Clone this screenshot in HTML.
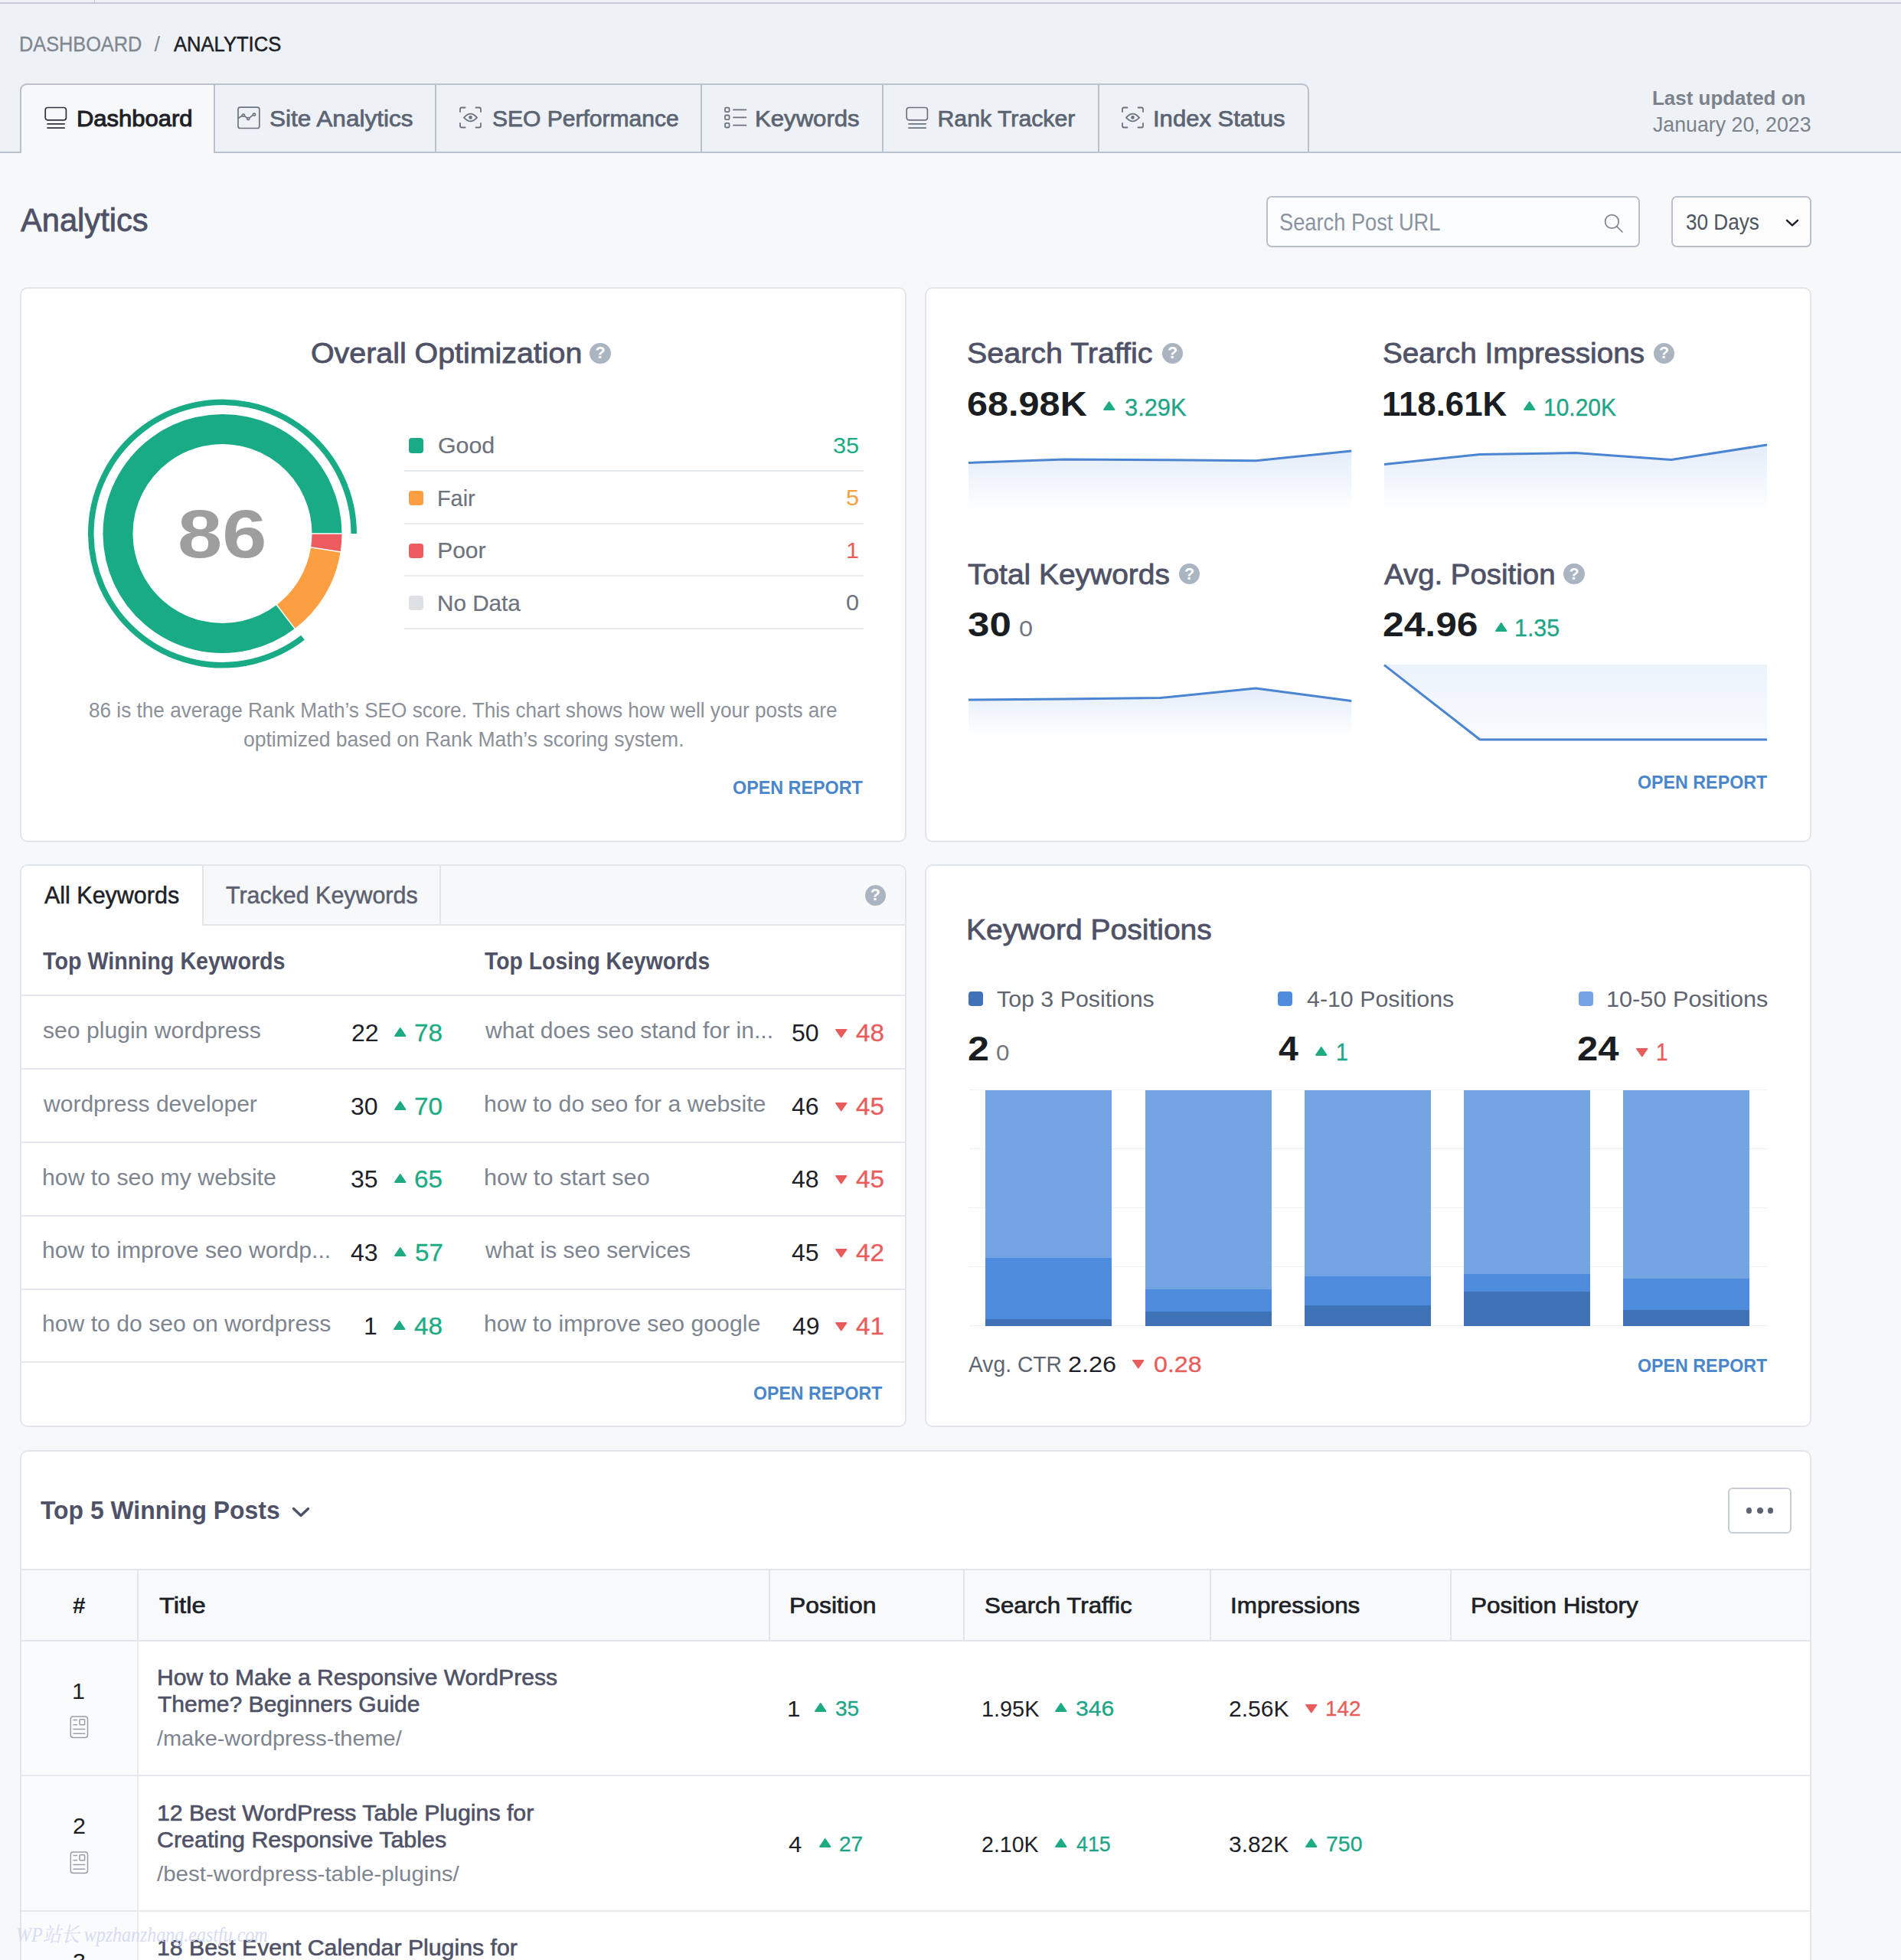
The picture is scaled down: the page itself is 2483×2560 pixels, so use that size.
<!DOCTYPE html>
<html lang="en"><head><meta charset="utf-8"><title>Analytics</title>
<style>
html,body{margin:0;padding:0}
body{width:2483px;height:2560px;position:relative;overflow:hidden;background:#f7f8fa;font-family:"Liberation Sans","Noto Sans CJK SC",sans-serif;}
.t{position:absolute;white-space:nowrap;line-height:1;display:block;transform-origin:0 0}
.b{position:absolute;box-sizing:border-box;display:block}
</style></head><body>
<div class="b" style="left:0.00px;top:0.00px;width:2483.00px;height:200.00px;background:#eef1f5;border-bottom:2px solid #b9c2cd;"></div>
<div class="b" style="left:0.00px;top:3.00px;width:2483.00px;height:1.80px;background:#c3cad3;"></div>
<div class="b" style="left:122.50px;top:0.00px;width:1.50px;height:4.00px;background:#c3cad3;"></div>
<span class="t" style="left:24.92px;top:45.14px;font-size:27.0px;color:#7f8790;transform:scaleX(0.9372);-webkit-text-stroke:0.3px #7f8790;">DASHBOARD</span>
<span class="t" style="left:201.50px;top:45.14px;font-size:27.0px;color:#7f8790;">/</span>
<span class="t" style="left:226.95px;top:45.14px;font-size:27.0px;color:#1d2127;transform:scaleX(0.9472);-webkit-text-stroke:0.5px #1d2127;">ANALYTICS</span>
<div class="b" style="left:26.00px;top:109.00px;width:1684.00px;height:91.00px;border:2px solid #b9c2cd;border-bottom:none;border-radius:9px 9px 0 0;"></div>
<div class="b" style="left:278.00px;top:110.00px;width:2.00px;height:89.00px;background:#b9c2cd;"></div>
<div class="b" style="left:568.00px;top:110.00px;width:2.00px;height:89.00px;background:#b9c2cd;"></div>
<div class="b" style="left:915.00px;top:110.00px;width:2.00px;height:89.00px;background:#b9c2cd;"></div>
<div class="b" style="left:1152.00px;top:110.00px;width:2.00px;height:89.00px;background:#b9c2cd;"></div>
<div class="b" style="left:1434.00px;top:110.00px;width:2.00px;height:89.00px;background:#b9c2cd;"></div>
<div class="b" style="left:26.00px;top:109.00px;width:255.00px;height:91.00px;background:#f7f8fa;border:2px solid #b9c2cd;border-bottom:none;border-radius:9px 0 0 0;"></div>
<svg class="b" style="left:57.50px;top:139.00px" width="30.00" height="30.00" viewBox="0 0 30.00 30.00"><g fill="none" stroke="#30343c" stroke-width="1.7" stroke-linecap="round"><rect x="1.2" y="1.5" width="27.2" height="16.4" rx="3.2"/><path d="M4 22.8H26.2M4 28.1H26.2"/></g></svg>
<svg class="b" style="left:310.00px;top:139.00px" width="30.00" height="30.00" viewBox="0 0 30.00 30.00"><g fill="none" stroke="#6c7480" stroke-width="1.7" stroke-linejoin="round"><rect x="1" y="1.2" width="27.8" height="27.3" rx="2.6"/><path d="M1 15.5L6.3 12.2M9.4 12.6L12.6 15M15.4 15.2L20.6 11.2"/><circle cx="7.9" cy="11.6" r="1.6"/><circle cx="14.2" cy="16.1" r="1.6"/><circle cx="22" cy="10.6" r="1.6"/></g></svg>
<svg class="b" style="left:599.60px;top:139.30px" width="30.00" height="30.00" viewBox="0 0 30.00 30.00"><g fill="none" stroke="#6c7480" stroke-width="1.8" stroke-linecap="round"><path d="M1 7V3.5Q1 1.5 3 1.5H7.5M21.5 1.5H26Q28 1.5 28 3.5V7M28 22V25.5Q28 27.5 26 27.5H21.5M7.5 27.5H3Q1 27.5 1 25.5V22"/><path d="M6 14.6Q14.5 4.6 23 14.6Q14.5 24 6 14.6Z"/></g><circle cx="14.5" cy="14.4" r="2.3" fill="#6c7480"/></svg>
<svg class="b" style="left:946.00px;top:139.30px" width="30.00" height="30.00" viewBox="0 0 30.00 30.00"><g fill="none" stroke="#6c7480" stroke-width="1.8" stroke-linecap="round"><rect x="1" y="1.6000000000000005" width="5.6" height="5.6" rx="1.4"/><path d="M12 4.4H28.4"/><rect x="1" y="11.5" width="5.6" height="5.6" rx="1.4"/><path d="M12 14.3H28.4"/><rect x="1" y="21.9" width="5.6" height="5.6" rx="1.4"/><path d="M12 24.7H28.4"/></g></svg>
<svg class="b" style="left:1183.00px;top:139.00px" width="30.00" height="30.00" viewBox="0 0 30.00 30.00"><g fill="none" stroke="#6c7480" stroke-width="1.7" stroke-linecap="round"><rect x="1.2" y="1.5" width="27.2" height="16.4" rx="3.2"/><path d="M4 22.8H26.2M4 28.1H26.2"/></g></svg>
<svg class="b" style="left:1464.50px;top:139.30px" width="30.00" height="30.00" viewBox="0 0 30.00 30.00"><g fill="none" stroke="#6c7480" stroke-width="1.8" stroke-linecap="round"><path d="M1 7V3.5Q1 1.5 3 1.5H7.5M21.5 1.5H26Q28 1.5 28 3.5V7M28 22V25.5Q28 27.5 26 27.5H21.5M7.5 27.5H3Q1 27.5 1 25.5V22"/><path d="M6 14.6Q14.5 4.6 23 14.6Q14.5 24 6 14.6Z"/></g><circle cx="14.5" cy="14.4" r="2.3" fill="#6c7480"/></svg>
<span class="t" style="left:99.66px;top:139.59px;font-size:30.25px;color:#1d2127;transform:scaleX(1.0240);-webkit-text-stroke:1.0px #1d2127;">Dashboard</span>
<span class="t" style="left:352.47px;top:139.59px;font-size:30.25px;color:#5b6472;transform:scaleX(1.0420);-webkit-text-stroke:0.75px #5b6472;">Site Analytics</span>
<span class="t" style="left:642.64px;top:139.59px;font-size:30.25px;color:#5b6472;transform:scaleX(0.9928);-webkit-text-stroke:0.75px #5b6472;">SEO Performance</span>
<span class="t" style="left:986.45px;top:139.59px;font-size:30.25px;color:#5b6472;transform:scaleX(1.0291);-webkit-text-stroke:0.75px #5b6472;">Keywords</span>
<span class="t" style="left:1224.52px;top:139.59px;font-size:30.25px;color:#5b6472;-webkit-text-stroke:0.75px #5b6472;">Rank Tracker</span>
<span class="t" style="left:1506.14px;top:139.59px;font-size:30.25px;color:#5b6472;transform:scaleX(1.0257);-webkit-text-stroke:0.75px #5b6472;">Index Status</span>
<span class="t" style="left:2158.26px;top:115.08px;font-size:26.25px;color:#7b828c;transform:scaleX(0.9883);font-weight:700;">Last updated on</span>
<span class="t" style="left:2159.08px;top:149.22px;font-size:27.5px;color:#7b828c;transform:scaleX(0.9721);">January 20, 2023</span>
<span class="t" style="left:26.92px;top:266.74px;font-size:42.25px;color:#4f5267;transform:scaleX(0.9853);-webkit-text-stroke:0.8px #4f5267;">Analytics</span>
<div class="b" style="left:1654.00px;top:256.00px;width:488.00px;height:67.00px;background:#fbfcfd;border:2px solid #b9c0ca;border-radius:7px;"></div>
<span class="t" style="left:1671.46px;top:274.68px;font-size:30.5px;color:#8a94a0;transform:scaleX(0.8931);">Search Post URL</span>
<svg class="b" style="left:2094.00px;top:278.00px" width="30.00" height="30.00" viewBox="0 0 30.00 30.00"><g fill="none" stroke="#7d8590" stroke-width="1.7" stroke-linecap="round"><circle cx="11.4" cy="11.4" r="8.8"/><path d="M18 18L25 25"/></g></svg>
<div class="b" style="left:2183.00px;top:256.00px;width:183.00px;height:67.00px;background:#fcfcfd;border:2px solid #b9c0ca;border-radius:7px;"></div>
<span class="t" style="left:2202.00px;top:275.32px;font-size:29.75px;color:#4d5560;transform:scaleX(0.8791);">30 Days</span>
<svg class="b" style="left:2331.00px;top:284.00px" width="20.00" height="14.00" viewBox="0 0 20.00 14.00"><path d="M3 3.8L10 10.3L17 3.8" fill="none" stroke="#1d2127" stroke-width="2.4" stroke-linecap="round" stroke-linejoin="round"/></svg>
<div class="b" style="left:26.00px;top:375.00px;width:1158.00px;height:725.00px;background:#fff;border:2px solid #e2e5e9;border-radius:10px;"></div>
<span class="t" style="left:406.14px;top:443.04px;font-size:37.75px;color:#4f5267;transform:scaleX(1.0425);-webkit-text-stroke:0.8px #4f5267;">Overall Optimization</span>
<div class="b" style="left:770.30px;top:447.60px;width:27.40px;height:27.40px;background:#abb5c1;border-radius:50%;"></div>
<span class="t" style="left:777.56px;top:451.20px;font-size:21.5px;color:#fff;font-weight:700;">?</span>
<svg class="b" style="left:100.00px;top:500.00px" width="400.00" height="400.00" viewBox="100 500 400 400"><path d="M427.00 697.00 A136.5 136.5 0 0 1 425.40 717.84" fill="none" stroke="#ec5b5e" stroke-width="39"/><path d="M425.40 717.84 A136.5 136.5 0 0 1 373.25 805.56" fill="none" stroke="#fb9f42" stroke-width="39"/><path d="M373.25 805.56 A136.5 136.5 0 1 1 427.00 697.00" fill="none" stroke="#19ab86" stroke-width="39"/><path d="M406.50 697.00L447.50 697.00" stroke="#fff" stroke-width="1.6"/><path d="M405.14 714.71L445.66 720.97" stroke="#fff" stroke-width="1.6"/><path d="M360.82 789.25L385.68 821.86" stroke="#fff" stroke-width="1.6"/><path d="M395.50 832.85 A171.7 171.7 0 1 1 462.20 697.00" fill="none" stroke="#19ab86" stroke-width="7.6"/></svg>
<span class="t" style="left:232.38px;top:653.36px;font-size:89.0px;color:#9e9e9e;transform:scaleX(1.1758);font-weight:700;">86</span>
<div class="b" style="left:533.70px;top:572.40px;width:19.20px;height:19.20px;background:#19ab86;border-radius:4px;"></div>
<span class="t" style="left:572.08px;top:566.90px;font-size:30.0px;color:#6d737d;transform:scaleX(1.0107);-webkit-text-stroke:0.2px #6d737d;">Good</span>
<span class="t" style="left:1088.13px;top:567.54px;font-size:29.25px;color:#1dab84;transform:scaleX(1.0500);">35</span>
<div class="b" style="left:527.60px;top:614.00px;width:600.30px;height:2.00px;background:#e8ebee;"></div>
<div class="b" style="left:533.70px;top:641.00px;width:19.20px;height:19.20px;background:#fb9f42;border-radius:4px;"></div>
<span class="t" style="left:571.24px;top:635.50px;font-size:30.0px;color:#6d737d;transform:scaleX(0.9608);-webkit-text-stroke:0.2px #6d737d;">Fair</span>
<span class="t" style="left:1105.21px;top:636.14px;font-size:29.25px;color:#f5a245;transform:scaleX(1.0500);">5</span>
<div class="b" style="left:527.60px;top:683.00px;width:600.30px;height:2.00px;background:#e8ebee;"></div>
<div class="b" style="left:533.70px;top:709.60px;width:19.20px;height:19.20px;background:#ec5b5e;border-radius:4px;"></div>
<span class="t" style="left:571.14px;top:704.11px;font-size:30.0px;color:#6d737d;-webkit-text-stroke:0.2px #6d737d;">Poor</span>
<span class="t" style="left:1105.42px;top:704.74px;font-size:29.25px;color:#e85c5c;transform:scaleX(1.0500);">1</span>
<div class="b" style="left:527.60px;top:751.00px;width:600.30px;height:2.00px;background:#e8ebee;"></div>
<div class="b" style="left:533.70px;top:778.20px;width:19.20px;height:19.20px;background:#dde1e5;border-radius:4px;"></div>
<span class="t" style="left:571.17px;top:772.70px;font-size:30.0px;color:#6d737d;transform:scaleX(0.9889);-webkit-text-stroke:0.2px #6d737d;">No Data</span>
<span class="t" style="left:1105.12px;top:773.34px;font-size:29.25px;color:#6d737d;transform:scaleX(1.0500);">0</span>
<div class="b" style="left:527.60px;top:820.00px;width:600.30px;height:2.00px;background:#e8ebee;"></div>
<span class="t" style="left:116.46px;top:914.76px;font-size:26.75px;color:#8b9099;transform:scaleX(0.9780);">86 is the average Rank Math’s SEO score. This chart shows how well your posts are</span>
<span class="t" style="left:318.19px;top:952.86px;font-size:26.75px;color:#8b9099;transform:scaleX(0.9908);">optimized based on Rank Math’s scoring system.</span>
<span class="t" style="left:957.44px;top:1017.35px;font-size:24.75px;color:#4a86cc;transform:scaleX(0.9426);font-weight:700;">OPEN REPORT</span>
<div class="b" style="left:1208.00px;top:375.00px;width:1158.00px;height:725.00px;background:#fff;border:2px solid #e2e5e9;border-radius:10px;"></div>
<span class="t" style="left:1263.21px;top:443.04px;font-size:37.75px;color:#4f5267;transform:scaleX(1.0445);-webkit-text-stroke:0.8px #4f5267;">Search Traffic</span>
<div class="b" style="left:1517.70px;top:447.60px;width:27.40px;height:27.40px;background:#abb5c1;border-radius:50%;"></div>
<span class="t" style="left:1524.96px;top:451.20px;font-size:21.5px;color:#fff;font-weight:700;">?</span>
<span class="t" style="left:1263.22px;top:505.63px;font-size:44.5px;color:#1a1e22;transform:scaleX(1.0922);font-weight:700;">68.98K</span>
<svg class="b" style="left:1440.00px;top:523.00px" width="17.50" height="13.80" viewBox="-1 -1 17.50 13.80"><path d="M7.75 1 L14.50 11.00 L1 11.00 Z" fill="#1dab84" stroke="#1dab84" stroke-width="1.8" stroke-linejoin="round"/></svg>
<span class="t" style="left:1468.83px;top:516.68px;font-size:30.5px;color:#1fa587;transform:scaleX(1.0102);-webkit-text-stroke:0.35px #1fa587;">3.29K</span>
<span class="t" style="left:1806.24px;top:443.04px;font-size:37.75px;color:#4f5267;transform:scaleX(1.0256);-webkit-text-stroke:0.8px #4f5267;">Search Impressions</span>
<div class="b" style="left:2159.80px;top:447.60px;width:27.40px;height:27.40px;background:#abb5c1;border-radius:50%;"></div>
<span class="t" style="left:2167.06px;top:451.20px;font-size:21.5px;color:#fff;font-weight:700;">?</span>
<span class="t" style="left:1805.24px;top:505.63px;font-size:44.5px;color:#1a1e22;transform:scaleX(0.9841);font-weight:700;">118.61K</span>
<svg class="b" style="left:1989.00px;top:523.00px" width="17.50" height="13.80" viewBox="-1 -1 17.50 13.80"><path d="M7.75 1 L14.50 11.00 L1 11.00 Z" fill="#1dab84" stroke="#1dab84" stroke-width="1.8" stroke-linejoin="round"/></svg>
<span class="t" style="left:2016.32px;top:516.68px;font-size:30.5px;color:#1fa587;transform:scaleX(0.9829);-webkit-text-stroke:0.35px #1fa587;">10.20K</span>
<span class="t" style="left:1264.13px;top:731.54px;font-size:37.75px;color:#4f5267;transform:scaleX(1.0309);-webkit-text-stroke:0.8px #4f5267;">Total Keywords</span>
<div class="b" style="left:1539.80px;top:736.10px;width:27.40px;height:27.40px;background:#abb5c1;border-radius:50%;"></div>
<span class="t" style="left:1547.06px;top:739.70px;font-size:21.5px;color:#fff;font-weight:700;">?</span>
<span class="t" style="left:1263.83px;top:794.13px;font-size:44.5px;color:#1a1e22;transform:scaleX(1.1468);font-weight:700;">30</span>
<span class="t" style="left:1330.73px;top:806.66px;font-size:28.75px;color:#73787f;transform:scaleX(1.1278);">0</span>
<span class="t" style="left:1807.92px;top:731.54px;font-size:37.75px;color:#4f5267;transform:scaleX(1.0178);-webkit-text-stroke:0.8px #4f5267;">Avg. Position</span>
<div class="b" style="left:2042.30px;top:736.10px;width:27.40px;height:27.40px;background:#abb5c1;border-radius:50%;"></div>
<span class="t" style="left:2049.56px;top:739.70px;font-size:21.5px;color:#fff;font-weight:700;">?</span>
<span class="t" style="left:1806.27px;top:794.13px;font-size:44.5px;color:#1a1e22;transform:scaleX(1.1182);font-weight:700;">24.96</span>
<svg class="b" style="left:1952.00px;top:811.50px" width="17.50" height="13.80" viewBox="-1 -1 17.50 13.80"><path d="M7.75 1 L14.50 11.00 L1 11.00 Z" fill="#1dab84" stroke="#1dab84" stroke-width="1.8" stroke-linejoin="round"/></svg>
<span class="t" style="left:1978.19px;top:805.18px;font-size:30.5px;color:#1fa587;transform:scaleX(0.9953);-webkit-text-stroke:0.35px #1fa587;">1.35</span>
<svg class="b" style="left:1261.00px;top:583.30px" width="508.30" height="86.70" viewBox="1261 583.3 508.29999999999995 86.70000000000005"><defs><linearGradient id="g1" gradientUnits="userSpaceOnUse" x1="0" y1="589.3" x2="0" y2="668"><stop offset="0" stop-color="#4e8cdd" stop-opacity="0.16"/><stop offset="1" stop-color="#4e8cdd" stop-opacity="0"/></linearGradient></defs><polygon points="1265.0,604.8 1390.1,600.4 1515.2,601.0 1640.2,602.0 1765.3,589.3 1765.3,668 1265.0,668" fill="url(#g1)"/><polyline points="1265.0,604.8 1390.1,600.4 1515.2,601.0 1640.2,602.0 1765.3,589.3" fill="none" stroke="#4b84d1" stroke-width="3" stroke-linejoin="round"/></svg>
<svg class="b" style="left:1804.00px;top:574.50px" width="508.00" height="95.50" viewBox="1804 574.5 508 95.5"><defs><linearGradient id="g2" gradientUnits="userSpaceOnUse" x1="0" y1="580.5" x2="0" y2="668"><stop offset="0" stop-color="#4e8cdd" stop-opacity="0.16"/><stop offset="1" stop-color="#4e8cdd" stop-opacity="0"/></linearGradient></defs><polygon points="1808.0,606.0 1933.0,593.0 2058.0,591.0 2183.0,600.0 2308.0,580.5 2308.0,668 1808.0,668" fill="url(#g2)"/><polyline points="1808.0,606.0 1933.0,593.0 2058.0,591.0 2183.0,600.0 2308.0,580.5" fill="none" stroke="#4b84d1" stroke-width="3" stroke-linejoin="round"/></svg>
<svg class="b" style="left:1261.00px;top:893.40px" width="508.30" height="70.60" viewBox="1261 893.4 508.29999999999995 70.60000000000002"><defs><linearGradient id="g3" gradientUnits="userSpaceOnUse" x1="0" y1="899.4" x2="0" y2="962"><stop offset="0" stop-color="#4e8cdd" stop-opacity="0.16"/><stop offset="1" stop-color="#4e8cdd" stop-opacity="0"/></linearGradient></defs><polygon points="1265.0,914.5 1390.1,913.5 1515.2,912.0 1640.2,899.4 1765.3,916.0 1765.3,962 1265.0,962" fill="url(#g3)"/><polyline points="1265.0,914.5 1390.1,913.5 1515.2,912.0 1640.2,899.4 1765.3,916.0" fill="none" stroke="#4b84d1" stroke-width="3" stroke-linejoin="round"/></svg>
<svg class="b" style="left:1800.00px;top:860.00px" width="520.00" height="112.00" viewBox="1800 860 520 112"><defs><linearGradient id="g4" x1="0" y1="0" x2="0" y2="1"><stop offset="0" stop-color="#4e8cdd" stop-opacity="0.115"/><stop offset="1" stop-color="#4e8cdd" stop-opacity="0.03"/></linearGradient></defs><polygon points="1808,868 2308,868 2308,966 1933,966" fill="url(#g4)"/><polyline points="1808,868.6 1933,966 2308,966" fill="none" stroke="#4b84d1" stroke-width="3" stroke-linejoin="round"/></svg>
<span class="t" style="left:2139.05px;top:1010.05px;font-size:24.75px;color:#4a86cc;transform:scaleX(0.9392);font-weight:700;">OPEN REPORT</span>
<div class="b" style="left:26.00px;top:1129.00px;width:1158.00px;height:735.00px;background:#fff;border:2px solid #e2e5e9;border-radius:10px;overflow:hidden;"><div class="b" style="left:0;top:0;width:1160px;height:78px;background:#f7f8fa;border-bottom:2px solid #e2e5e9;"></div><div class="b" style="left:0;top:0;width:238px;height:78px;background:#fff;border-right:2px solid #e2e5e9;"></div><div class="b" style="left:546px;top:0;width:2px;height:77px;background:#e2e5e9;"></div></div>
<span class="t" style="left:57.94px;top:1153.75px;font-size:31.25px;color:#1d2127;transform:scaleX(0.9753);-webkit-text-stroke:0.5px #1d2127;">All Keywords</span>
<span class="t" style="left:294.92px;top:1153.75px;font-size:31.25px;color:#5b6170;transform:scaleX(0.9727);-webkit-text-stroke:0.5px #5b6170;">Tracked Keywords</span>
<div class="b" style="left:1129.60px;top:1155.80px;width:27.40px;height:27.40px;background:#abb5c1;border-radius:50%;"></div>
<span class="t" style="left:1136.86px;top:1159.40px;font-size:21.5px;color:#fff;font-weight:700;">?</span>
<span class="t" style="left:56.28px;top:1240.18px;font-size:30.5px;color:#4f5267;transform:scaleX(0.9413);font-weight:700;">Top Winning Keywords</span>
<span class="t" style="left:633.38px;top:1240.18px;font-size:30.5px;color:#4f5267;transform:scaleX(0.9300);font-weight:700;">Top Losing Keywords</span>
<div class="b" style="left:28.00px;top:1299.00px;width:1154.00px;height:2.00px;background:#e5e8ec;"></div>
<div class="b" style="left:28.00px;top:1395.00px;width:1154.00px;height:2.00px;background:#e5e8ec;"></div>
<div class="b" style="left:28.00px;top:1491.00px;width:1154.00px;height:2.00px;background:#e5e8ec;"></div>
<div class="b" style="left:28.00px;top:1587.00px;width:1154.00px;height:2.00px;background:#e5e8ec;"></div>
<div class="b" style="left:28.00px;top:1683.00px;width:1154.00px;height:2.00px;background:#e5e8ec;"></div>
<div class="b" style="left:28.00px;top:1778.00px;width:1154.00px;height:2.00px;background:#e5e8ec;"></div>
<span class="t" style="left:55.76px;top:1331.95px;font-size:29.0px;color:#7d8590;transform:scaleX(1.0390);">seo plugin wordpress</span>
<span class="t" style="left:541.36px;top:1333.88px;font-size:30.5px;color:#1dab84;transform:scaleX(1.0900);-webkit-text-stroke:0.3px #1dab84;">78</span>
<svg class="b" style="left:513.97px;top:1340.70px" width="17.50" height="13.80" viewBox="-1 -1 17.50 13.80"><path d="M7.75 1 L14.50 11.00 L1 11.00 Z" fill="#1dab84" stroke="#1dab84" stroke-width="1.8" stroke-linejoin="round"/></svg>
<span class="t" style="left:458.56px;top:1333.88px;font-size:30.5px;color:#1d2127;transform:scaleX(1.0500);">22</span>
<span class="t" style="left:633.74px;top:1331.95px;font-size:29.0px;color:#7d8590;transform:scaleX(1.0366);">what does seo stand for in...</span>
<span class="t" style="left:1118.26px;top:1333.88px;font-size:30.5px;color:#e85c5c;transform:scaleX(1.0900);-webkit-text-stroke:0.3px #e85c5c;">48</span>
<svg class="b" style="left:1089.93px;top:1342.70px" width="17.50" height="13.50" viewBox="-1 -1 17.50 13.50"><path d="M1 0.8 L14.50 0.8 L7.75 10.50 Z" fill="#e85c5c" stroke="#e85c5c" stroke-width="1.8" stroke-linejoin="round"/></svg>
<span class="t" style="left:1034.16px;top:1333.88px;font-size:30.5px;color:#1d2127;transform:scaleX(1.0500);">50</span>
<span class="t" style="left:56.64px;top:1427.75px;font-size:29.0px;color:#7d8590;transform:scaleX(1.0358);">wordpress developer</span>
<span class="t" style="left:541.22px;top:1429.68px;font-size:30.5px;color:#1dab84;transform:scaleX(1.0900);-webkit-text-stroke:0.3px #1dab84;">70</span>
<svg class="b" style="left:513.82px;top:1436.50px" width="17.50" height="13.80" viewBox="-1 -1 17.50 13.80"><path d="M7.75 1 L14.50 11.00 L1 11.00 Z" fill="#1dab84" stroke="#1dab84" stroke-width="1.8" stroke-linejoin="round"/></svg>
<span class="t" style="left:458.05px;top:1429.68px;font-size:30.5px;color:#1d2127;transform:scaleX(1.0500);">30</span>
<span class="t" style="left:631.60px;top:1427.75px;font-size:29.0px;color:#7d8590;transform:scaleX(1.0436);">how to do seo for a website</span>
<span class="t" style="left:1118.22px;top:1429.68px;font-size:30.5px;color:#e85c5c;transform:scaleX(1.0900);-webkit-text-stroke:0.3px #e85c5c;">45</span>
<svg class="b" style="left:1089.88px;top:1438.50px" width="17.50" height="13.50" viewBox="-1 -1 17.50 13.50"><path d="M1 0.8 L14.50 0.8 L7.75 10.50 Z" fill="#e85c5c" stroke="#e85c5c" stroke-width="1.8" stroke-linejoin="round"/></svg>
<span class="t" style="left:1034.26px;top:1429.68px;font-size:30.5px;color:#1d2127;transform:scaleX(1.0500);">46</span>
<span class="t" style="left:54.50px;top:1523.55px;font-size:29.0px;color:#7d8590;transform:scaleX(1.0425);">how to seo my website</span>
<span class="t" style="left:541.32px;top:1525.48px;font-size:30.5px;color:#1dab84;transform:scaleX(1.0900);-webkit-text-stroke:0.3px #1dab84;">65</span>
<svg class="b" style="left:513.90px;top:1532.30px" width="17.50" height="13.80" viewBox="-1 -1 17.50 13.80"><path d="M7.75 1 L14.50 11.00 L1 11.00 Z" fill="#1dab84" stroke="#1dab84" stroke-width="1.8" stroke-linejoin="round"/></svg>
<span class="t" style="left:458.23px;top:1525.48px;font-size:30.5px;color:#1d2127;transform:scaleX(1.0500);">35</span>
<span class="t" style="left:631.57px;top:1523.55px;font-size:29.0px;color:#7d8590;transform:scaleX(1.0586);">how to start seo</span>
<span class="t" style="left:1118.22px;top:1525.48px;font-size:30.5px;color:#e85c5c;transform:scaleX(1.0900);-webkit-text-stroke:0.3px #e85c5c;">45</span>
<svg class="b" style="left:1089.88px;top:1534.30px" width="17.50" height="13.50" viewBox="-1 -1 17.50 13.50"><path d="M1 0.8 L14.50 0.8 L7.75 10.50 Z" fill="#e85c5c" stroke="#e85c5c" stroke-width="1.8" stroke-linejoin="round"/></svg>
<span class="t" style="left:1034.25px;top:1525.48px;font-size:30.5px;color:#1d2127;transform:scaleX(1.0500);">48</span>
<span class="t" style="left:54.51px;top:1619.35px;font-size:29.0px;color:#7d8590;transform:scaleX(1.0402);">how to improve seo wordp...</span>
<span class="t" style="left:541.59px;top:1621.28px;font-size:30.5px;color:#1dab84;transform:scaleX(1.0900);-webkit-text-stroke:0.3px #1dab84;">57</span>
<svg class="b" style="left:513.82px;top:1628.10px" width="17.50" height="13.80" viewBox="-1 -1 17.50 13.80"><path d="M7.75 1 L14.50 11.00 L1 11.00 Z" fill="#1dab84" stroke="#1dab84" stroke-width="1.8" stroke-linejoin="round"/></svg>
<span class="t" style="left:458.21px;top:1621.28px;font-size:30.5px;color:#1d2127;transform:scaleX(1.0500);">43</span>
<span class="t" style="left:633.74px;top:1619.35px;font-size:29.0px;color:#7d8590;transform:scaleX(1.0329);">what is seo services</span>
<span class="t" style="left:1118.49px;top:1621.28px;font-size:30.5px;color:#e85c5c;transform:scaleX(1.0900);-webkit-text-stroke:0.3px #e85c5c;">42</span>
<svg class="b" style="left:1090.16px;top:1630.10px" width="17.50" height="13.50" viewBox="-1 -1 17.50 13.50"><path d="M1 0.8 L14.50 0.8 L7.75 10.50 Z" fill="#e85c5c" stroke="#e85c5c" stroke-width="1.8" stroke-linejoin="round"/></svg>
<span class="t" style="left:1034.48px;top:1621.28px;font-size:30.5px;color:#1d2127;transform:scaleX(1.0500);">45</span>
<span class="t" style="left:54.51px;top:1715.15px;font-size:29.0px;color:#7d8590;transform:scaleX(1.0404);">how to do seo on wordpress</span>
<span class="t" style="left:541.36px;top:1717.08px;font-size:30.5px;color:#1dab84;transform:scaleX(1.0900);-webkit-text-stroke:0.3px #1dab84;">48</span>
<svg class="b" style="left:513.03px;top:1723.90px" width="17.50" height="13.80" viewBox="-1 -1 17.50 13.80"><path d="M7.75 1 L14.50 11.00 L1 11.00 Z" fill="#1dab84" stroke="#1dab84" stroke-width="1.8" stroke-linejoin="round"/></svg>
<span class="t" style="left:475.38px;top:1717.08px;font-size:30.5px;color:#1d2127;transform:scaleX(1.0500);">1</span>
<span class="t" style="left:631.60px;top:1715.15px;font-size:29.0px;color:#7d8590;transform:scaleX(1.0422);">how to improve seo google</span>
<span class="t" style="left:1118.44px;top:1717.08px;font-size:30.5px;color:#e85c5c;transform:scaleX(1.0900);-webkit-text-stroke:0.3px #e85c5c;">41</span>
<svg class="b" style="left:1090.11px;top:1725.90px" width="17.50" height="13.50" viewBox="-1 -1 17.50 13.50"><path d="M1 0.8 L14.50 0.8 L7.75 10.50 Z" fill="#e85c5c" stroke="#e85c5c" stroke-width="1.8" stroke-linejoin="round"/></svg>
<span class="t" style="left:1034.60px;top:1717.08px;font-size:30.5px;color:#1d2127;transform:scaleX(1.0500);">49</span>
<span class="t" style="left:983.65px;top:1808.25px;font-size:24.75px;color:#4a86cc;transform:scaleX(0.9347);font-weight:700;">OPEN REPORT</span>
<div class="b" style="left:1208.00px;top:1129.00px;width:1158.00px;height:735.00px;background:#fff;border:2px solid #e2e5e9;border-radius:10px;"></div>
<span class="t" style="left:1261.60px;top:1196.14px;font-size:37.75px;color:#4f5267;transform:scaleX(1.0331);-webkit-text-stroke:0.8px #4f5267;">Keyword Positions</span>
<div class="b" style="left:1264.80px;top:1295.40px;width:19.00px;height:19.00px;background:#3f72b6;border-radius:4px;"></div>
<span class="t" style="left:1302.32px;top:1290.74px;font-size:29.25px;color:#5f6570;transform:scaleX(1.0373);">Top 3 Positions</span>
<span class="t" style="left:1263.56px;top:1349.18px;font-size:43.5px;color:#1a1e22;transform:scaleX(1.1555);font-weight:700;">2</span>
<span class="t" style="left:1300.77px;top:1360.66px;font-size:28.75px;color:#73787f;transform:scaleX(1.0914);">0</span>
<div class="b" style="left:1669.00px;top:1295.40px;width:19.00px;height:19.00px;background:#4e8cdd;border-radius:4px;"></div>
<span class="t" style="left:1707.30px;top:1290.74px;font-size:29.25px;color:#5f6570;transform:scaleX(1.0374);">4-10 Positions</span>
<span class="t" style="left:1669.60px;top:1349.18px;font-size:43.5px;color:#1a1e22;transform:scaleX(1.0686);font-weight:700;">4</span>
<svg class="b" style="left:1717.00px;top:1365.50px" width="17.50" height="13.80" viewBox="-1 -1 17.50 13.80"><path d="M7.75 1 L14.50 11.00 L1 11.00 Z" fill="#1dab84" stroke="#1dab84" stroke-width="1.8" stroke-linejoin="round"/></svg>
<span class="t" style="left:1744.53px;top:1359.18px;font-size:30.5px;color:#1fa587;transform:scaleX(0.9353);-webkit-text-stroke:0.35px #1fa587;">1</span>
<div class="b" style="left:2062.00px;top:1295.40px;width:19.00px;height:19.00px;background:#74a4e4;border-radius:4px;"></div>
<span class="t" style="left:2097.66px;top:1290.74px;font-size:29.25px;color:#5f6570;transform:scaleX(1.0487);">10-50 Positions</span>
<span class="t" style="left:2060.30px;top:1349.18px;font-size:43.5px;color:#1a1e22;transform:scaleX(1.1255);font-weight:700;">24</span>
<svg class="b" style="left:2135.80px;top:1367.50px" width="17.50" height="13.50" viewBox="-1 -1 17.50 13.50"><path d="M1 0.8 L14.50 0.8 L7.75 10.50 Z" fill="#e85c5c" stroke="#e85c5c" stroke-width="1.8" stroke-linejoin="round"/></svg>
<span class="t" style="left:2162.88px;top:1359.18px;font-size:30.5px;color:#e85c5c;transform:scaleX(0.9125);-webkit-text-stroke:0.35px #e85c5c;">1</span>
<div class="b" style="left:1266.00px;top:1423.20px;width:1041.50px;height:1.20px;background:#eef0f3;"></div>
<div class="b" style="left:1266.00px;top:1500.20px;width:1041.50px;height:1.20px;background:#eef0f3;"></div>
<div class="b" style="left:1266.00px;top:1577.10px;width:1041.50px;height:1.20px;background:#eef0f3;"></div>
<div class="b" style="left:1266.00px;top:1654.00px;width:1041.50px;height:1.20px;background:#eef0f3;"></div>
<div class="b" style="left:1266.00px;top:1731.00px;width:1041.50px;height:1.20px;background:#eef0f3;"></div>
<div class="b" style="left:1287.00px;top:1423.80px;width:165.40px;height:219.20px;background:#74a4e4;"></div>
<div class="b" style="left:1287.00px;top:1643.00px;width:165.40px;height:79.80px;background:#4e8cdd;"></div>
<div class="b" style="left:1287.00px;top:1722.80px;width:165.40px;height:8.80px;background:#3f72b6;"></div>
<div class="b" style="left:1495.60px;top:1423.80px;width:165.40px;height:260.50px;background:#74a4e4;"></div>
<div class="b" style="left:1495.60px;top:1684.30px;width:165.40px;height:29.10px;background:#4e8cdd;"></div>
<div class="b" style="left:1495.60px;top:1713.40px;width:165.40px;height:18.20px;background:#3f72b6;"></div>
<div class="b" style="left:1703.70px;top:1423.80px;width:165.40px;height:243.00px;background:#74a4e4;"></div>
<div class="b" style="left:1703.70px;top:1666.80px;width:165.40px;height:37.80px;background:#4e8cdd;"></div>
<div class="b" style="left:1703.70px;top:1704.60px;width:165.40px;height:27.00px;background:#3f72b6;"></div>
<div class="b" style="left:1912.00px;top:1423.80px;width:165.40px;height:240.20px;background:#74a4e4;"></div>
<div class="b" style="left:1912.00px;top:1664.00px;width:165.40px;height:23.00px;background:#4e8cdd;"></div>
<div class="b" style="left:1912.00px;top:1687.00px;width:165.40px;height:44.60px;background:#3f72b6;"></div>
<div class="b" style="left:2120.00px;top:1423.80px;width:165.40px;height:246.20px;background:#74a4e4;"></div>
<div class="b" style="left:2120.00px;top:1670.00px;width:165.40px;height:41.30px;background:#4e8cdd;"></div>
<div class="b" style="left:2120.00px;top:1711.30px;width:165.40px;height:20.30px;background:#3f72b6;"></div>
<span class="t" style="left:1264.94px;top:1767.74px;font-size:29.25px;color:#5f6570;transform:scaleX(0.9661);">Avg. CTR</span>
<span class="t" style="left:1394.77px;top:1767.32px;font-size:29.75px;color:#1d2127;transform:scaleX(1.0907);">2.26</span>
<svg class="b" style="left:1477.70px;top:1775.00px" width="17.50" height="13.50" viewBox="-1 -1 17.50 13.50"><path d="M1 0.8 L14.50 0.8 L7.75 10.50 Z" fill="#e85c5c" stroke="#e85c5c" stroke-width="1.8" stroke-linejoin="round"/></svg>
<span class="t" style="left:1506.54px;top:1767.32px;font-size:29.75px;color:#e85c5c;transform:scaleX(1.0821);-webkit-text-stroke:0.3px #e85c5c;">0.28</span>
<span class="t" style="left:2139.05px;top:1772.05px;font-size:24.75px;color:#4a86cc;transform:scaleX(0.9392);font-weight:700;">OPEN REPORT</span>
<div class="b" style="left:26.00px;top:1894.00px;width:2340.00px;height:706.00px;background:#fff;border:2px solid #e2e5e9;border-radius:10px;overflow:hidden;"><div class="b" style="left:0;top:153px;width:2340px;height:95px;background:#f8f9fb;border-top:2px solid #e2e5e9;border-bottom:2px solid #e2e5e9;"></div><div class="b" style="left:0;top:248px;width:153px;height:460px;background:#fafbfc;"></div></div>
<span class="t" style="left:53.24px;top:1957.38px;font-size:32.75px;color:#4f5267;transform:scaleX(0.9736);font-weight:700;">Top 5 Winning Posts</span>
<svg class="b" style="left:379.00px;top:1965.30px" width="28.00" height="20.00" viewBox="0 0 28.00 20.00"><path d="M4.5 5.5L14 14.5L23.5 5.5" fill="none" stroke="#4f5267" stroke-width="3.4" stroke-linecap="round" stroke-linejoin="round"/></svg>
<div class="b" style="left:2257.00px;top:1943.00px;width:83.00px;height:60.00px;background:#fff;border:2px solid #c6cdd6;border-radius:6px;"></div>
<div class="b" style="left:2280.60px;top:1969.00px;width:7.80px;height:7.80px;background:#5b6472;border-radius:50%;"></div>
<div class="b" style="left:2294.80px;top:1969.00px;width:7.80px;height:7.80px;background:#5b6472;border-radius:50%;"></div>
<div class="b" style="left:2308.70px;top:1969.00px;width:7.80px;height:7.80px;background:#5b6472;border-radius:50%;"></div>
<div class="b" style="left:179.00px;top:2050.00px;width:2.00px;height:93.00px;background:#e2e5e9;"></div>
<div class="b" style="left:1004.00px;top:2050.00px;width:2.00px;height:93.00px;background:#e2e5e9;"></div>
<div class="b" style="left:1258.00px;top:2050.00px;width:2.00px;height:93.00px;background:#e2e5e9;"></div>
<div class="b" style="left:1580.00px;top:2050.00px;width:2.00px;height:93.00px;background:#e2e5e9;"></div>
<div class="b" style="left:1894.00px;top:2050.00px;width:2.00px;height:93.00px;background:#e2e5e9;"></div>
<div class="b" style="left:179.00px;top:2143.00px;width:2.00px;height:457.00px;background:#e8ebee;"></div>
<span class="t" style="left:94.91px;top:2082.12px;font-size:29.75px;color:#1d2127;font-weight:700;">#</span>
<span class="t" style="left:208.26px;top:2081.69px;font-size:30.25px;color:#1d2127;transform:scaleX(1.0833);-webkit-text-stroke:0.7px #1d2127;">Title</span>
<span class="t" style="left:1031.39px;top:2081.69px;font-size:30.25px;color:#1d2127;transform:scaleX(1.0535);-webkit-text-stroke:0.7px #1d2127;">Position</span>
<span class="t" style="left:1286.28px;top:2081.69px;font-size:30.25px;color:#1d2127;transform:scaleX(1.0348);-webkit-text-stroke:0.7px #1d2127;">Search Traffic</span>
<span class="t" style="left:1606.80px;top:2081.69px;font-size:30.25px;color:#1d2127;transform:scaleX(1.0384);-webkit-text-stroke:0.7px #1d2127;">Impressions</span>
<span class="t" style="left:1921.42px;top:2081.69px;font-size:30.25px;color:#1d2127;transform:scaleX(1.0404);-webkit-text-stroke:0.7px #1d2127;">Position History</span>
<span class="t" style="left:94.32px;top:2194.65px;font-size:29.0px;color:#1d2127;transform:scaleX(1.0500);">1</span>
<svg class="b" style="left:91.30px;top:2241.20px" width="25.00" height="30.00" viewBox="0 0 25.00 30.00"><g fill="none" stroke="#9a9fa6" stroke-width="1.5" stroke-linecap="round"><rect x="1.3" y="1" width="22.2" height="27.4" rx="3.2"/><rect x="13" y="4.8" width="6.6" height="7" rx="0.8"/><path d="M5 5.6H9.4M5 11.8H9.4M5 17.6H19.6M5 23.2H19.6"/></g></svg>
<span class="t" style="left:204.53px;top:2176.84px;font-size:29.25px;color:#4f5267;transform:scaleX(1.0290);-webkit-text-stroke:0.6px #4f5267;">How to Make a Responsive WordPress</span>
<span class="t" style="left:206.32px;top:2211.84px;font-size:29.25px;color:#4f5267;transform:scaleX(1.0275);-webkit-text-stroke:0.6px #4f5267;">Theme? Beginners Guide</span>
<span class="t" style="left:205.30px;top:2257.02px;font-size:27.5px;color:#7d8590;transform:scaleX(1.0512);">/make-wordpress-theme/</span>
<span class="t" style="left:1027.92px;top:2217.02px;font-size:29.75px;color:#1d2127;transform:scaleX(1.0500);">1</span>
<svg class="b" style="left:1063.30px;top:2223.40px" width="17.50" height="13.80" viewBox="-1 -1 17.50 13.80"><path d="M7.75 1 L14.50 11.00 L1 11.00 Z" fill="#1dab84" stroke="#1dab84" stroke-width="1.8" stroke-linejoin="round"/></svg>
<span class="t" style="left:1091.33px;top:2218.96px;font-size:26.75px;color:#1fa587;transform:scaleX(1.0500);-webkit-text-stroke:0.3px #1fa587;">35</span>
<span class="t" style="left:1281.50px;top:2217.02px;font-size:29.75px;color:#1d2127;transform:scaleX(0.9701);">1.95K</span>
<svg class="b" style="left:1377.00px;top:2223.40px" width="17.50" height="13.80" viewBox="-1 -1 17.50 13.80"><path d="M7.75 1 L14.50 11.00 L1 11.00 Z" fill="#1dab84" stroke="#1dab84" stroke-width="1.8" stroke-linejoin="round"/></svg>
<span class="t" style="left:1405.35px;top:2218.96px;font-size:26.75px;color:#1fa587;transform:scaleX(1.1287);-webkit-text-stroke:0.3px #1fa587;">346</span>
<span class="t" style="left:1604.79px;top:2217.02px;font-size:29.75px;color:#1d2127;transform:scaleX(1.0103);">2.56K</span>
<svg class="b" style="left:1703.80px;top:2225.40px" width="17.50" height="13.50" viewBox="-1 -1 17.50 13.50"><path d="M1 0.8 L14.50 0.8 L7.75 10.50 Z" fill="#e85c5c" stroke="#e85c5c" stroke-width="1.8" stroke-linejoin="round"/></svg>
<span class="t" style="left:1730.88px;top:2218.96px;font-size:26.75px;color:#e85c5c;transform:scaleX(1.0424);-webkit-text-stroke:0.3px #e85c5c;">142</span>
<div class="b" style="left:28.00px;top:2318.00px;width:2336.00px;height:2.00px;background:#e5e8ec;"></div>
<span class="t" style="left:94.73px;top:2371.35px;font-size:29.0px;color:#1d2127;transform:scaleX(1.0500);">2</span>
<svg class="b" style="left:91.30px;top:2417.90px" width="25.00" height="30.00" viewBox="0 0 25.00 30.00"><g fill="none" stroke="#9a9fa6" stroke-width="1.5" stroke-linecap="round"><rect x="1.3" y="1" width="22.2" height="27.4" rx="3.2"/><rect x="13" y="4.8" width="6.6" height="7" rx="0.8"/><path d="M5 5.6H9.4M5 11.8H9.4M5 17.6H19.6M5 23.2H19.6"/></g></svg>
<span class="t" style="left:204.69px;top:2353.54px;font-size:29.25px;color:#4f5267;transform:scaleX(1.0358);-webkit-text-stroke:0.6px #4f5267;">12 Best WordPress Table Plugins for</span>
<span class="t" style="left:205.46px;top:2388.54px;font-size:29.25px;color:#4f5267;transform:scaleX(1.0398);-webkit-text-stroke:0.6px #4f5267;">Creating Responsive Tables</span>
<span class="t" style="left:205.30px;top:2433.72px;font-size:27.5px;color:#7d8590;transform:scaleX(1.0715);">/best-wordpress-table-plugins/</span>
<span class="t" style="left:1029.58px;top:2393.72px;font-size:29.75px;color:#1d2127;transform:scaleX(1.0500);">4</span>
<svg class="b" style="left:1068.50px;top:2400.10px" width="17.50" height="13.80" viewBox="-1 -1 17.50 13.80"><path d="M7.75 1 L14.50 11.00 L1 11.00 Z" fill="#1dab84" stroke="#1dab84" stroke-width="1.8" stroke-linejoin="round"/></svg>
<span class="t" style="left:1095.99px;top:2395.66px;font-size:26.75px;color:#1fa587;transform:scaleX(1.0500);-webkit-text-stroke:0.3px #1fa587;">27</span>
<span class="t" style="left:1282.26px;top:2393.72px;font-size:29.75px;color:#1d2127;transform:scaleX(0.9603);">2.10K</span>
<svg class="b" style="left:1377.00px;top:2400.10px" width="17.50" height="13.80" viewBox="-1 -1 17.50 13.80"><path d="M7.75 1 L14.50 11.00 L1 11.00 Z" fill="#1dab84" stroke="#1dab84" stroke-width="1.8" stroke-linejoin="round"/></svg>
<span class="t" style="left:1405.88px;top:2395.66px;font-size:26.75px;color:#1fa587;transform:scaleX(1.0024);-webkit-text-stroke:0.3px #1fa587;">415</span>
<span class="t" style="left:1605.16px;top:2393.72px;font-size:29.75px;color:#1d2127;transform:scaleX(1.0055);">3.82K</span>
<svg class="b" style="left:1703.80px;top:2400.10px" width="17.50" height="13.80" viewBox="-1 -1 17.50 13.80"><path d="M7.75 1 L14.50 11.00 L1 11.00 Z" fill="#1dab84" stroke="#1dab84" stroke-width="1.8" stroke-linejoin="round"/></svg>
<span class="t" style="left:1731.54px;top:2395.66px;font-size:26.75px;color:#1fa587;transform:scaleX(1.0659);-webkit-text-stroke:0.3px #1fa587;">750</span>
<div class="b" style="left:28.00px;top:2495.00px;width:2336.00px;height:2.00px;background:#e5e8ec;"></div>
<span class="t" style="left:94.82px;top:2548.05px;font-size:29.0px;color:#1d2127;transform:scaleX(1.0500);">3</span>
<span class="t" style="left:204.70px;top:2530.24px;font-size:29.25px;color:#4f5267;transform:scaleX(1.0341);-webkit-text-stroke:0.6px #4f5267;">18 Best Event Calendar Plugins for</span>
<span class="t" style="left:21.39px;top:2513.64px;font-size:27.0px;color:#d6dcf2;transform:scaleX(0.8889);font-family:'Liberation Serif','Noto Serif CJK SC',serif;font-style:italic;">WP站长  wpzhanzhang.eastfu.com</span>
</body></html>
